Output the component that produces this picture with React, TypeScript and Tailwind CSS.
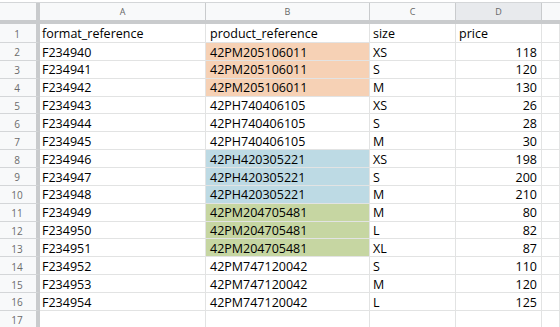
import React from "react";

type Row = { id: string; product: string; size: string; price: number; tone?: "orange" | "blue" | "green" };

const rows: Row[] = [
    { id: "F234940", product: "42PM205106011", size: "XS", price: 118, tone: "orange" },
    { id: "F234941", product: "42PM205106011", size: "S", price: 120, tone: "orange" },
    { id: "F234942", product: "42PM205106011", size: "M", price: 130, tone: "orange" },
    { id: "F234943", product: "42PH740406105", size: "XS", price: 26 },
    { id: "F234944", product: "42PH740406105", size: "S", price: 28 },
    { id: "F234945", product: "42PH740406105", size: "M", price: 30 },
    { id: "F234946", product: "42PH420305221", size: "XS", price: 198, tone: "blue" },
    { id: "F234947", product: "42PH420305221", size: "S", price: 200, tone: "blue" },
    { id: "F234948", product: "42PH420305221", size: "M", price: 210, tone: "blue" },
    { id: "F234949", product: "42PM204705481", size: "M", price: 80, tone: "green" },
    { id: "F234950", product: "42PM204705481", size: "L", price: 82, tone: "green" },
    { id: "F234951", product: "42PM204705481", size: "XL", price: 87, tone: "green" },
    { id: "F234952", product: "42PM747120042", size: "S", price: 110 },
    { id: "F234953", product: "42PM747120042", size: "M", price: 120 },
    { id: "F234954", product: "42PM747120042", size: "L", price: 125 },
];

const toneClass = {
    orange: "bg-[#f6d1b5]",
    blue: "bg-[#bddae4]",
    green: "bg-[#c6d6a2]",
};

// sheets puts text at the bottom of the cell, hence the top padding
const cell = "border-r border-b border-[#e2e3e3] flex items-center pt-[3px] overflow-hidden whitespace-nowrap";
const rowHead = "w-[40px] shrink-0 border-r-4 border-r-[#c9cbcd] border-b border-b-[#d4d6d8] bg-[#f8f9fa] flex items-center justify-center pt-[3px] pr-[2px] text-[10px] text-[#6b6b6b]";

function ColHead({ label, width, active }: { label: string, width: string, active?: boolean }) {
    return (
        <div className={`${width} ${active ? 'bg-[#e8eaed]' : 'bg-[#f8f9fa]'} shrink-0 border-r border-[#c9cbcd] flex items-center justify-center text-[9px] text-[#666]`}>
            {label}
        </div>
    );
}

export default function App() {
    return (
        <div className="w-[560px] h-[327px] overflow-hidden bg-white text-[12.5px] text-black" style={{ fontFamily: '"Open Sans", sans-serif' }}>
            <div className="h-[3px] border-b border-[#d4d6d8]" />
            {/* column headers */}
            <div className="flex h-[21px] border-b-4 border-[#c9cbcd]">
                <div className="w-[40px] shrink-0 border-r-4 border-[#c9cbcd] bg-[#f8f9fa]" />
                <ColHead label="A" width="w-[166px]" />
                <ColHead label="B" width="w-[164px]" />
                <ColHead label="C" width="w-[86px]" />
                <ColHead label="D" width="w-[86px]" active />
                <div className="flex-1 bg-[#f8f9fa]" />
            </div>

            <div className="flex h-[19px]">
                <div className={rowHead}>1</div>
                <div className={`${cell} w-[166px] pl-[2px]`}>format_reference</div>
                <div className={`${cell} w-[164px] pl-[4px]`}>product_reference</div>
                <div className={`${cell} w-[86px] pl-[3px]`}>size</div>
                <div className={`${cell} w-[86px] pl-[3px]`}>price</div>
                <div className={`${cell} flex-1`} />
            </div>

            {rows.map((r, i) => (
                <div className="flex h-[17.87px]" key={r.id}>
                    <div className={rowHead}>{i + 2}</div>
                    <div className={`${cell} w-[166px] pl-[2px]`}>{r.id}</div>
                    <div className={`${cell} w-[164px] pl-[4px] ${r.tone ? toneClass[r.tone] : ''}`}>{r.product}</div>
                    <div className={`${cell} w-[86px] pl-[3px]`}>{r.size}</div>
                    <div className={`${cell} w-[86px] justify-end pr-[4px]`}>{r.price}</div>
                    <div className={`${cell} flex-1`} />
                </div>
            ))}

            <div className="flex h-[18px]">
                <div className={rowHead}>17</div>
                <div className={`${cell} w-[166px]`} />
                <div className={`${cell} w-[164px]`} />
                <div className={`${cell} w-[86px]`} />
                <div className={`${cell} w-[86px]`} />
                <div className={`${cell} flex-1`} />
            </div>
        </div>
    );
}
